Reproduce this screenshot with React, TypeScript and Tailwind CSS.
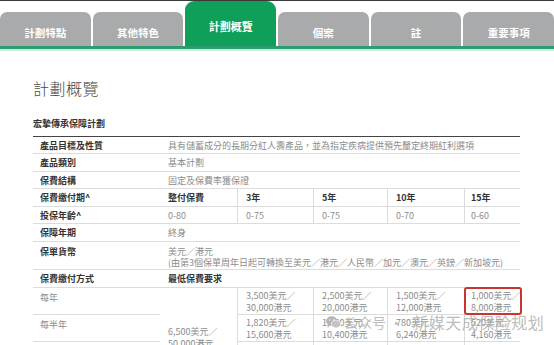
import clsx from "clsx";

const tabs = [
  { label: "計劃特點" },
  { label: "其他特色" },
  { label: "計劃概覽", active: true },
  { label: "個案" },
  { label: "註" },
  { label: "重要事項" },
];

const font = "font-['Noto_Sans_CJK_TC','Noto_Sans',sans-serif]";

type CellProps = {
  className?: string;
  children?: React.ReactNode;
  label?: boolean;
  bold?: boolean;
  left?: boolean;
};

const Cell = ({ className, children, label, bold, left }: CellProps) => (
  <div
    className={clsx(
      "border-b border-[#dcdcdc] text-[9px] leading-[11px]",
      label ? "pl-[7px]" : "pl-2",
      bold ? "font-bold text-[#333]" : "text-[#8c8c8c]",
      left && "border-l",
      className
    )}
  >
    {children}
  </div>
);

const premiums = [
  ["3,500美元／", "30,000港元"],
  ["2,500美元／", "20,000港元"],
  ["1,500美元／", "12,000港元"],
  ["1,000美元／", "8,000港元"],
];

const halfYear = [
  ["1,820美元／", "15,600港元"],
  ["1,300美元／", "10,400港元"],
  ["780美元／", "6,240港元"],
  ["520美元／", "4,160港元"],
];

const WeChatIcon = () => (
  <svg width="15" height="13" viewBox="0 0 24 21" fill="#b4b4b4">
    <ellipse cx="9" cy="8" rx="9" ry="7.5" />
    <path d="M3 13 L2 17 L7 14.5 Z" />
    <ellipse cx="16" cy="13" rx="7.5" ry="6.3" fill="#c4c4c4" stroke="#fff" strokeWidth="1" />
    <circle cx="6" cy="6.5" r="1.1" fill="#fff" />
    <circle cx="12" cy="6.5" r="1.1" fill="#fff" />
  </svg>
);

const App = () => {
  return (
    <div className={clsx("relative w-[554px] h-[345px] overflow-hidden bg-white", font)}>
      {/* tab bar */}
      <div className="h-px bg-[#3a3a3a]" />
      <div className="flex items-end gap-[2px] h-[45px]">
        {tabs.map((t) =>
          t.active ? (
            <div
              key={t.label}
              className="flex-1 h-[45px] rounded-t-[9px] bg-[#0f9f58] flex items-center justify-center pt-[6px] text-[11px] font-bold text-white"
            >
              {t.label}
            </div>
          ) : (
            <div
              key={t.label}
              className="flex-1 h-[34px] rounded-t-[7px] bg-[#a9aaab] flex items-center justify-center pt-[7px] text-[10.5px] font-bold text-white"
            >
              {t.label}
            </div>
          )
        )}
      </div>
      <div className="h-[3px] bg-[#2d9c70]" />
      <div className="h-[2px] bg-[#c9eedd]" />

      <div className="pl-[33px] pr-[34px]">
        <h1 className="mt-[27px] text-[16px] leading-[20px] font-light text-[#4a4a4a] tracking-[0.5px]">
          計劃概覽
        </h1>
        <div className="mt-[20px] text-[9px] leading-[12px] font-bold text-[#333]">宏摯傳承保障計劃</div>

        <div className="mt-[6px] border-t border-[#444] grid grid-cols-[127px_77px_76px_74px_77px_56px] grid-rows-[17px_18px_17px_18px_17px_18px_28px_18px_27px_27px_40px]">
          <Cell label bold className="flex items-center">產品目標及性質</Cell>
          <Cell className="col-span-5 flex items-center">
            具有儲蓄成分的長期分紅人壽產品，並為指定疾病提供預先釐定終期紅利選項
          </Cell>

          <Cell label bold className="flex items-center">產品類別</Cell>
          <Cell className="col-span-5 flex items-center">基本計劃</Cell>

          <Cell label bold className="flex items-center">保費結構</Cell>
          <Cell className="col-span-5 flex items-center">固定及保費率獲保證</Cell>

          <Cell label bold className="flex items-center">保費繳付期^</Cell>
          <Cell bold className="flex items-center">整付保費</Cell>
          <Cell bold left className="flex items-center">3年</Cell>
          <Cell bold left className="flex items-center">5年</Cell>
          <Cell bold left className="flex items-center">10年</Cell>
          <Cell bold left className="flex items-center !pl-[6px]">15年</Cell>

          <Cell label bold className="flex items-center">投保年齡^</Cell>
          <Cell className="flex items-center">0-80</Cell>
          <Cell left className="flex items-center">0-75</Cell>
          <Cell left className="flex items-center">0-75</Cell>
          <Cell left className="flex items-center">0-70</Cell>
          <Cell left className="flex items-center !pl-[6px]">0-60</Cell>

          <Cell label bold className="flex items-center">保障年期</Cell>
          <Cell className="col-span-5 flex items-center">終身</Cell>

          <Cell label bold className="pt-[4px]">保單貨幣</Cell>
          <Cell className="col-span-5 pt-[4px]">
            <div>美元／港元</div>
            <div className="whitespace-nowrap">(由第3個保單周年日起可轉換至美元／港元／人民幣／加元／澳元／英鎊／新加坡元)</div>
          </Cell>

          <Cell label bold className="flex items-center">保費繳付方式</Cell>
          <Cell bold className="col-span-5 flex items-center">最低保費要求</Cell>

          <Cell label className="pt-[4px]">每年</Cell>
          <Cell className="row-span-3 border-b-0 pt-[38px] leading-[12px] text-[9.5px]">
            <div>6,500美元／</div>
            <div>50,000港元</div>
          </Cell>
          {premiums.map((p, i) => (
            <Cell
              key={p[0]}
              left
              className={clsx("relative pt-[2px] leading-[12px] text-[9.5px] whitespace-nowrap", i === 3 && "!pl-[6px]")}
            >
              <div>{p[0]}</div>
              <div>{p[1]}</div>
              {i === 3 && (
                <div className="absolute left-[-1px] top-[-1px] right-[-2px] bottom-[-1px] border-2 border-[#c8352f] rounded-[3px]" />
              )}
            </Cell>
          ))}

          <Cell label className="pt-[4px]">每半年</Cell>
          {halfYear.map((p, i) => (
            <Cell
              key={p[0]}
              left
              className={clsx("pt-[2px] leading-[12px] text-[9.5px] whitespace-nowrap", i === 3 && "!pl-[6px]")}
            >
              <div>{p[0]}</div>
              <div>{p[1]}</div>
            </Cell>
          ))}

          <Cell label />
          <Cell left />
          <Cell left />
          <Cell left />
          <Cell left />
        </div>
      </div>

      {/* watermark */}
      <div className="absolute left-[326px] top-[312px] flex items-center gap-[3px] font-['Noto_Sans_CJK_SC',sans-serif] text-[#b4b4b4]/90 pointer-events-none">
        <WeChatIcon />
        <span className="text-[14px] leading-[20px]">公众号 ·</span>
        <span className="ml-[6px] text-[16px] leading-[20px] tracking-[0.5px]">新媒天成保险规划</span>
      </div>
    </div>
  );
};

export default App;
